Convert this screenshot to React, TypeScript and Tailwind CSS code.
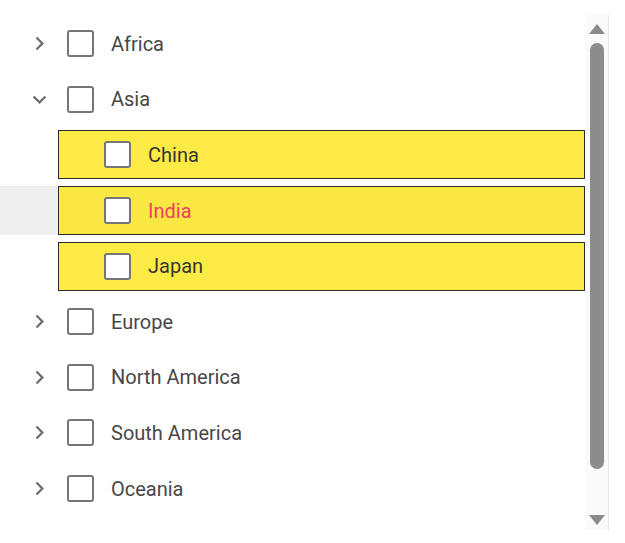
import React from "react"

type Node = {
  id: string
  name: string
  expanded?: boolean
  children?: { id: string; name: string; hover?: boolean }[]
}

const nodes: Node[] = [
  { id: "af", name: "Africa" },
  {
    id: "as",
    name: "Asia",
    expanded: true,
    children: [
      { id: "cn", name: "China" },
      { id: "in", name: "India", hover: true },
      { id: "jp", name: "Japan" },
    ],
  },
  { id: "eu", name: "Europe" },
  { id: "na", name: "North America" },
  { id: "sa", name: "South America" },
  { id: "oc", name: "Oceania" },
]

function ChevronRight() {
  return (
    <svg width="27" height="27" viewBox="0 0 24 24" fill="#6e6e6e">
      <path d="M10 6 8.59 7.41 13.17 12l-4.58 4.59L10 18l6-6z" />
    </svg>
  )
}

function ChevronDown() {
  return (
    <svg width="27" height="27" viewBox="0 0 24 24" fill="#6e6e6e">
      <path d="M16.59 8.59 12 13.17 7.41 8.59 6 10l6 6 6-6z" />
    </svg>
  )
}

function Box({ white }: { white?: boolean }) {
  return (
    <div
      className={
        "w-[27px] h-[27px] shrink-0 rounded-[3px] border-2 border-[#767676] " +
        (white ? "bg-white" : "bg-transparent")
      }
    />
  )
}

export default function App() {
  return (
    <div
      className="w-[625px] h-[543px] bg-white pt-[15px] flex"
      style={{ fontFamily: "Roboto, 'Liberation Sans', sans-serif" }}
    >
      {/* tree */}
      <div className="w-[585px] h-[515px] pt-px overflow-hidden">
        {nodes.map((n) => (
          <div key={n.id}>
            <div className="h-[55.6px] flex items-center">
              <div className="w-[27px] ml-[26px] flex items-center justify-center">
                {n.expanded ? <ChevronDown /> : <ChevronRight />}
              </div>
              <div className="ml-[14px]">
                <Box />
              </div>
              <span className="ml-[17px] text-[20px] text-[#474747]">{n.name}</span>
            </div>

            {n.expanded &&
              n.children?.map((c) => (
                <div key={c.id} className="h-[55.6px] flex items-center">
                  <div
                    className={
                      "w-full h-[49px] flex " + (c.hover ? "bg-[#eeeeee]" : "")
                    }
                  >
                    <div
                      className={
                        "ml-[58px] flex-1 flex items-center border border-[#2b2b2b] pl-[45px] " +
                        (c.hover ? "bg-[#f9e843]" : "bg-[#fdeb45]")
                      }
                    >
                      <Box white />
                      <span
                        className={
                          "ml-[17px] text-[20px] " +
                          (c.hover ? "text-[#f0405e]" : "text-[#363636]")
                        }
                      >
                        {c.name}
                      </span>
                    </div>
                  </div>
                </div>
              ))}
          </div>
        ))}
      </div>

      {/* scrollbar */}
      <div className="w-[24px] h-[515px] bg-[#fafafa] border-r border-[#e6e6e6] flex flex-col items-center">
        <svg width="16" height="10" viewBox="0 0 16 10" className="mt-[9px]">
          <polygon points="8,0 16,10 0,10" fill="#8a8a8a" />
        </svg>
        <div className="mt-[9px] w-[14px] h-[426px] rounded-full bg-[#8c8c8c]" />
        <div className="flex-1" />
        <svg width="16" height="10" viewBox="0 0 16 10" className="mb-[5px]">
          <polygon points="0,0 16,0 8,10" fill="#8a8a8a" />
        </svg>
      </div>
    </div>
  )
}
